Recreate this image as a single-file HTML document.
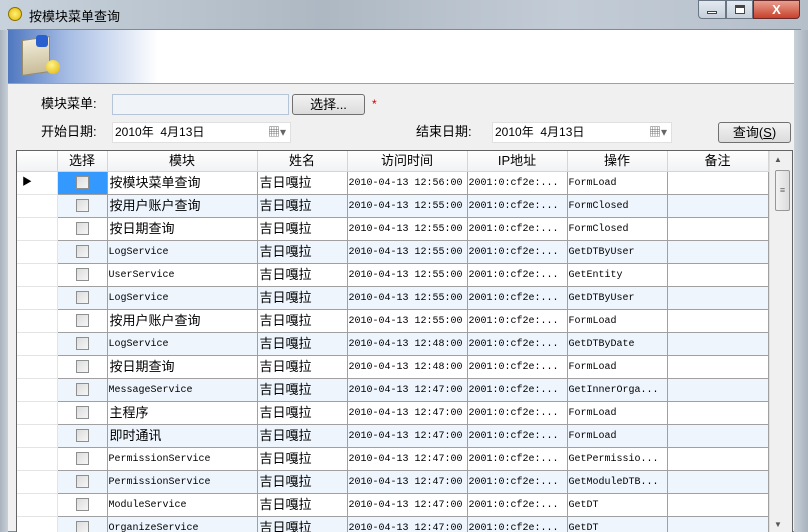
<!DOCTYPE html>
<html><head><meta charset="utf-8"><style>
*{margin:0;padding:0;box-sizing:border-box}
body{width:808px;height:532px;overflow:hidden;position:relative;background:#b9c4d0;font-family:"Liberation Sans","Noto Sans CJK SC",sans-serif;font-size:12px;color:#000}
.abs{position:absolute}
.title{left:0;top:0;width:808px;height:30px;background:linear-gradient(90deg,#c8d2dc,#aeb8c3 40%,#c3ccd6 70%,#b5bfca)}
.client{left:7px;top:29px;width:794px;height:503px;background:#f0f0f0;border:1px solid #7d8a97}
.banner{left:8px;top:30px;width:792px;height:54px;background:linear-gradient(90deg,#4f78c0 0,#a7bde4 60px,#fff 150px);border-bottom:1px solid #a0a0a0}
.lbl{font-size:13px;line-height:16px}
.inp{background:#fff;border:1px solid #b5c4d6}
.btn{border:1px solid #707070;border-radius:3px;background:linear-gradient(#f2f2f2,#dcdcdc);text-align:center;font-size:13px}
.grid{left:16px;top:150px;width:777px;height:382px;border:1px solid #646464;border-bottom:none;background:#fff;overflow:hidden}
table{border-collapse:collapse;table-layout:fixed;position:absolute;left:0;top:0;width:751px}
td,th{border:1px solid #a0a0a0;height:23px;white-space:nowrap;overflow:hidden;padding:0 2px;line-height:21px;vertical-align:middle}
th{height:20px;line-height:18px;font-weight:normal;font-size:13px;background:linear-gradient(#fff,#f1f2f4);border-color:#d5d5d5;border-top:none}
td{font-size:13px}
td.m{font-family:"Liberation Mono","Noto Sans CJK SC",monospace;font-size:10px;padding:3px 1px 0;line-height:18px}
tr.a td{background:#eef5fd}
td.rh{background:#fff!important;border-color:#e4e4e4;border-left:none}
.cb{display:block;margin:0 auto;width:13px;height:13px;border:1px solid #8e8f8f;background:linear-gradient(135deg,#dcdcdc,#f6f6f6)}
</style></head><body>
<div class="abs title"></div>
<div class="abs" style="left:8px;top:7px;width:14px;height:14px;border-radius:50%;background:radial-gradient(#fff27a,#e2b400);border:1px solid #8a7000"></div>
<div class="abs" style="left:29px;top:6px;font-size:13px">按模块菜单查询</div>
<div class="abs" style="left:698px;top:0;width:28px;height:19px;border:1px solid #6b7684;border-radius:0 0 0 4px;background:linear-gradient(#e3e9f0,#c5cfda)"><div style="margin:10px auto 0;width:10px;height:3px;background:#fff;border:1px solid #444"></div></div>
<div class="abs" style="left:726px;top:0;width:27px;height:19px;border:1px solid #6b7684;background:linear-gradient(#e3e9f0,#c5cfda)"><div style="margin:4px auto 0;width:10px;height:9px;border:1px solid #444;border-top-width:3px;background:#fff"></div></div>
<div class="abs" style="left:753px;top:0;width:47px;height:19px;border:1px solid #6b2a2a;border-radius:0 0 4px 0;background:linear-gradient(#e8a090,#c8412c);color:#fff;font-weight:bold;text-align:center;font-size:13px;line-height:17px">X</div>
<div class="abs client"></div>
<div class="abs banner"></div>
<div class="abs" style="left:22px;top:38px;width:28px;height:36px;background:linear-gradient(#f2ecd8,#c8bd9a);border:1px solid #9a8c68;transform:skewY(-8deg)"></div>
<div class="abs" style="left:36px;top:35px;width:12px;height:12px;background:#2a5fd0;border-radius:3px"></div>
<div class="abs" style="left:46px;top:60px;width:14px;height:14px;border-radius:50%;background:radial-gradient(circle at 40% 35%,#fff48a,#e0b000)"></div>
<div class="abs lbl" style="left:41px;top:96px">模块菜单:</div>
<div class="abs inp" style="left:112px;top:94px;width:177px;height:21px;background:#f0f4f8"></div>
<div class="abs btn" style="left:292px;top:94px;width:73px;height:21px;line-height:19px">选择...</div>
<div class="abs" style="left:372px;top:97px;color:#c00;font-size:12px">*</div>
<div class="abs lbl" style="left:41px;top:124px">开始日期:</div>
<div class="abs inp" style="left:112px;top:122px;width:179px;height:21px;border-color:#e0e0e0;line-height:19px;padding-left:2px;font-size:12px">2010年&nbsp; 4月13日<span style="position:absolute;right:4px;top:0;color:#666">▦▾</span></div>
<div class="abs lbl" style="left:416px;top:124px">结束日期:</div>
<div class="abs inp" style="left:492px;top:122px;width:180px;height:21px;border-color:#e0e0e0;line-height:19px;padding-left:2px;font-size:12px">2010年&nbsp; 4月13日<span style="position:absolute;right:4px;top:0;color:#666">▦▾</span></div>
<div class="abs btn" style="left:718px;top:122px;width:73px;height:21px;line-height:19px">查询(<u>S</u>)</div>
<div class="abs grid">
<table>
<colgroup><col style="width:40px"><col style="width:50px"><col style="width:150px"><col style="width:90px"><col style="width:120px"><col style="width:100px"><col style="width:100px"><col style="width:101px"></colgroup>
<tr><th style="border-left:none"></th><th>选择</th><th>模块</th><th>姓名</th><th>访问时间</th><th>IP地址</th><th>操作</th><th>备注</th></tr>
<tr><td class="rh" style="font-size:10px;padding-left:5px">▶</td><td style="background:#3399ff"><span class="cb"></span></td><td>按模块菜单查询</td><td>吉日嘎拉</td><td class="m">2010-04-13 12:56:00</td><td class="m">2001:0:cf2e:...</td><td class="m">FormLoad</td><td></td></tr>
<tr class="a"><td class="rh"></td><td><span class="cb"></span></td><td>按用户账户查询</td><td>吉日嘎拉</td><td class="m">2010-04-13 12:55:00</td><td class="m">2001:0:cf2e:...</td><td class="m">FormClosed</td><td></td></tr>
<tr><td class="rh"></td><td><span class="cb"></span></td><td>按日期查询</td><td>吉日嘎拉</td><td class="m">2010-04-13 12:55:00</td><td class="m">2001:0:cf2e:...</td><td class="m">FormClosed</td><td></td></tr>
<tr class="a"><td class="rh"></td><td><span class="cb"></span></td><td class="m">LogService</td><td>吉日嘎拉</td><td class="m">2010-04-13 12:55:00</td><td class="m">2001:0:cf2e:...</td><td class="m">GetDTByUser</td><td></td></tr>
<tr><td class="rh"></td><td><span class="cb"></span></td><td class="m">UserService</td><td>吉日嘎拉</td><td class="m">2010-04-13 12:55:00</td><td class="m">2001:0:cf2e:...</td><td class="m">GetEntity</td><td></td></tr>
<tr class="a"><td class="rh"></td><td><span class="cb"></span></td><td class="m">LogService</td><td>吉日嘎拉</td><td class="m">2010-04-13 12:55:00</td><td class="m">2001:0:cf2e:...</td><td class="m">GetDTByUser</td><td></td></tr>
<tr><td class="rh"></td><td><span class="cb"></span></td><td>按用户账户查询</td><td>吉日嘎拉</td><td class="m">2010-04-13 12:55:00</td><td class="m">2001:0:cf2e:...</td><td class="m">FormLoad</td><td></td></tr>
<tr class="a"><td class="rh"></td><td><span class="cb"></span></td><td class="m">LogService</td><td>吉日嘎拉</td><td class="m">2010-04-13 12:48:00</td><td class="m">2001:0:cf2e:...</td><td class="m">GetDTByDate</td><td></td></tr>
<tr><td class="rh"></td><td><span class="cb"></span></td><td>按日期查询</td><td>吉日嘎拉</td><td class="m">2010-04-13 12:48:00</td><td class="m">2001:0:cf2e:...</td><td class="m">FormLoad</td><td></td></tr>
<tr class="a"><td class="rh"></td><td><span class="cb"></span></td><td class="m">MessageService</td><td>吉日嘎拉</td><td class="m">2010-04-13 12:47:00</td><td class="m">2001:0:cf2e:...</td><td class="m">GetInnerOrga...</td><td></td></tr>
<tr><td class="rh"></td><td><span class="cb"></span></td><td>主程序</td><td>吉日嘎拉</td><td class="m">2010-04-13 12:47:00</td><td class="m">2001:0:cf2e:...</td><td class="m">FormLoad</td><td></td></tr>
<tr class="a"><td class="rh"></td><td><span class="cb"></span></td><td>即时通讯</td><td>吉日嘎拉</td><td class="m">2010-04-13 12:47:00</td><td class="m">2001:0:cf2e:...</td><td class="m">FormLoad</td><td></td></tr>
<tr><td class="rh"></td><td><span class="cb"></span></td><td class="m">PermissionService</td><td>吉日嘎拉</td><td class="m">2010-04-13 12:47:00</td><td class="m">2001:0:cf2e:...</td><td class="m">GetPermissio...</td><td></td></tr>
<tr class="a"><td class="rh"></td><td><span class="cb"></span></td><td class="m">PermissionService</td><td>吉日嘎拉</td><td class="m">2010-04-13 12:47:00</td><td class="m">2001:0:cf2e:...</td><td class="m">GetModuleDTB...</td><td></td></tr>
<tr><td class="rh"></td><td><span class="cb"></span></td><td class="m">ModuleService</td><td>吉日嘎拉</td><td class="m">2010-04-13 12:47:00</td><td class="m">2001:0:cf2e:...</td><td class="m">GetDT</td><td></td></tr>
<tr class="a"><td class="rh"></td><td><span class="cb"></span></td><td class="m">OrganizeService</td><td>吉日嘎拉</td><td class="m">2010-04-13 12:47:00</td><td class="m">2001:0:cf2e:...</td><td class="m">GetDT</td><td></td></tr>
</table>
<div class="abs" style="left:752px;top:0;width:23px;height:382px;background:#f0f0f0;border-left:1px solid #e0e0e0"></div>
<div class="abs" style="left:757px;top:4px;font-size:8px;color:#555">▲</div>
<div class="abs" style="left:758px;top:19px;width:15px;height:41px;border:1px solid #979797;border-radius:2px;background:linear-gradient(90deg,#f2f2f2,#dcdcdc);font-size:9px;color:#666;text-align:center;line-height:39px">≡</div>
<div class="abs" style="left:757px;top:369px;font-size:8px;color:#555">▼</div>
</div>
<div class="abs" style="left:794px;top:30px;width:14px;height:502px;background:linear-gradient(90deg,#c8d0d8,#a9b3be)"></div>
<div class="abs" style="left:0;top:30px;width:8px;height:502px;background:linear-gradient(90deg,#a9b3be,#c8d0d8)"></div>
</body></html>
